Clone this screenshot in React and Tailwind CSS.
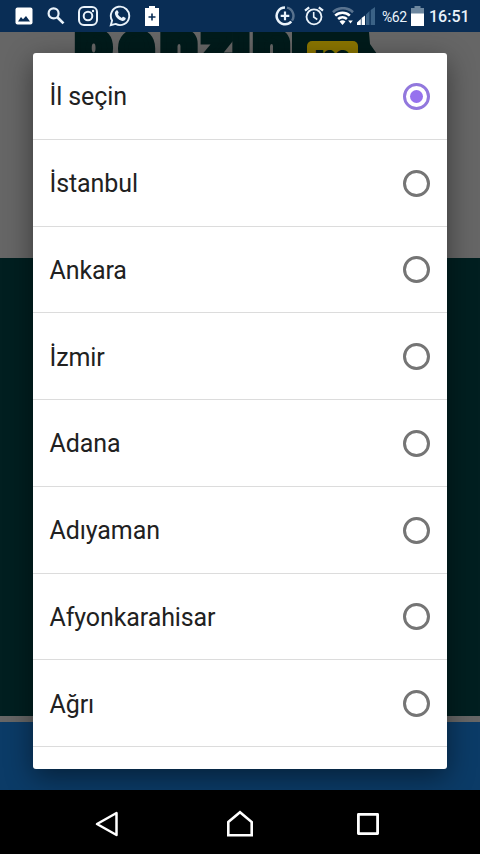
const CITIES = ['İl seçin', 'İstanbul', 'Ankara', 'İzmir', 'Adana', 'Adıyaman', 'Afyonkarahisar', 'Ağrı'];

function StatusBar() {
  return (
    <header className="relative z-10 flex h-8 shrink-0 items-center bg-[#092d55] pl-[15px] pr-[11px] text-[#eaf3fb]">
      {/* Notifications */}
      <svg className="w-[18px] h-[18px]" viewBox="0 0 18 18">
        <rect x="0.5" y="0.5" width="17" height="17" rx="2" fill="#fff" />
        <path d="M3 14.5L6 10l2 2.2L11 9l4 5.5z" fill="#092d55" />
      </svg>
      <svg className="ml-[14px] w-[18px] h-[18px]" viewBox="0 0 18 18" fill="none" stroke="currentColor" strokeWidth="2.2">
        <circle cx="6.6" cy="6.4" r="5" />
        <path d="M10.3 10.2l6.2 6.2" strokeWidth="2.7" />
      </svg>
      <svg className="ml-[13px] w-5 h-5" viewBox="0 0 20 20" fill="none" stroke="currentColor" strokeWidth="2">
        <rect x="1" y="1" width="18" height="18" rx="5" />
        <circle cx="10" cy="10" r="4.3" />
        <circle cx="15" cy="5" r="1.2" fill="currentColor" stroke="none" />
      </svg>
      <svg className="ml-[11px] w-[22px] h-[22px]" viewBox="0 0 22 22">
        <path d="M1.8 20.2l1.3-4.7a9.2 9.2 0 1 1 3.5 3.4z" fill="none" stroke="currentColor" strokeWidth="1.9" />
        <path d="M7.3 5.5c.5-.5 1.2-.5 1.5.2l.8 1.8c.2.5-.1.9-.8 1.6.9 1.7 2.1 2.9 4 3.8.8-1 1.1-1.3 1.6-1.1l1.9.9c.6.3.5 1 .1 1.8-.7 1.3-2.3 1.7-3.8 1.2-3.5-1.1-5.8-3.5-6.6-6.5-.4-1.5.3-2.8 1.3-3.7z" fill="currentColor" />
      </svg>
      <svg className="ml-[14px] w-[14px] h-[22px]" viewBox="0 0 14 22">
        <path d="M4 1h6v2h4v18H0V3h4z" fill="#fff" />
        <path d="M7 8.5v7M3.5 12h7" stroke="#092d55" strokeWidth="1.6" />
      </svg>

      {/* System icons */}
      <svg className="ml-auto w-[20px] h-5" viewBox="0 0 20 20" fill="none">
        <path d="M12 1.7a8.4 8.4 0 0 1 5 12.9" stroke="#59738f" strokeWidth="2.4" />
        <path d="M10 1.5a8.4 8.4 0 1 0 6.3 14" stroke="currentColor" strokeWidth="2.5" />
        <path d="M10 5.6v8.6M5.7 9.9h8.6" stroke="currentColor" strokeWidth="2.2" />
      </svg>
      <svg className="ml-[9px] w-5 h-5" viewBox="0 0 20 20" fill="none" stroke="currentColor">
        <circle cx="10" cy="10.8" r="7.5" strokeWidth="1.8" />
        <path d="M1 4.7l4.2-3.4M19 4.7l-4.2-3.4" strokeWidth="2.2" />
        <path d="M9.7 6v5l3.6 2.5" strokeWidth="1.6" />
      </svg>
      <svg className="ml-[8px] w-[22px] h-[18px]" viewBox="0 0 22 18" fill="none" strokeWidth="2.6">
        <path d="M1 5.2a14.5 14.5 0 0 1 20 0" stroke="#59738f" />
        <path d="M3.2 8.6a10.7 10.7 0 0 1 14.6 0" stroke="#fff" />
        <path d="M6.1 12a6.8 6.8 0 0 1 8.8 0" stroke="#fff" />
        <path d="M7.5 14.6a4.5 4.5 0 0 1 6 0l-3 3.3z" fill="#fff" />
        <path d="M18.5 16.5l2.3-3h-4.6z" fill="#fff" />
      </svg>
      <svg className="ml-[3px] w-[18px] h-[18px]" viewBox="0 0 18 18">
        <path d="M0 18v-2.6L3.8 12v6z" fill="#fff" />
        <path d="M4.6 18v-7l3.4-2.5V18z" fill="#fff" />
        <path d="M9 18V7.5L12.5 4v14zM13.7 18V3L18 0v18z" fill="#3b6286" />
      </svg>
      <span className="ml-[7px] w-[25px] whitespace-nowrap pt-px text-[14px] leading-none tracking-[-0.4px]">%62</span>
      <svg className="ml-[4px] w-[13px] h-5" viewBox="0 0 13 20">
        <path d="M3.5 0h6v2H13v7H0V2h3.5z" fill="#6d879f" />
        <path d="M0 7.5h13V20H0z" fill="#fff" />
      </svg>
      <span className="ml-[5px] w-[40px] whitespace-nowrap pt-px text-[16px] font-medium leading-none">16:51</span>
    </header>
  );
}

function Logo() {
  return (
    <div className="flex h-[226px] items-start overflow-hidden bg-[#666] pl-[72px]">
      <div className="-mt-[24px] flex text-center text-[57px] leading-[72px] font-black text-[#011b1b] font-['Inter',sans-serif] [-webkit-text-stroke:6px_#011b1b]">
        <span className="w-[43px]">b</span>
        <span className="w-[43px]">e</span>
        <span className="w-[42px]">n</span>
        <span className="w-[31px]">z</span>
        <span className="w-[20px]">i</span>
        <span className="w-[41px]">n</span>
      </div>
      <div className="h-[60px] w-[85px] bg-[#011b1b] pl-[14px] pt-[9px] [clip-path:polygon(0_0,77px_0,78px_12px,85px_22px,85px_60px,0_60px)]">
        <div className="ml-px flex h-[46px] w-[51px] justify-center rounded-[5px] bg-[#8a7500] text-[40px] leading-[34px] font-black text-[#011b1b] font-['Inter',sans-serif]">m</div>
      </div>
    </div>
  );
}

function Radio({ checked }) {
  return (
    <span className={`mt-px flex h-[27px] w-[27px] items-center justify-center rounded-full border-3 ${checked ? 'border-[#9278dd]' : 'border-[#757575]'}`}>
      {checked && <span className="h-[13px] w-[13px] rounded-full bg-[#9672ee]" />}
    </span>
  );
}

function CityDialog() {
  return (
    <div className="absolute left-[33px] top-[21px] h-[716px] w-[414px] overflow-hidden rounded-[3px] bg-white shadow-[0_8px_28px_rgba(0,0,0,0.45)]">
      {CITIES.map((city, i) => (
        <div key={city} className="flex h-[86.75px] items-center justify-between border-b border-[#dcdcdc] pl-[16.5px] pr-[17.5px]">
          <span className="pt-[3px] text-[25px] leading-8 tracking-[-0.1px] text-[#212121]">{city}</span>
          <Radio checked={i === 0} />
        </div>
      ))}
    </div>
  );
}

function NavBar() {
  return (
    <nav className="relative z-10 flex h-16 shrink-0 items-center justify-between bg-black pl-[94px] pr-[98px] pt-[4px]">
      <svg className="w-7 h-7" viewBox="0 0 28 28" fill="none" stroke="#fff" strokeWidth="2.5" strokeLinejoin="round">
        <path d="M3 14L22.5 3v22z" />
      </svg>
      <svg className="ml-[4px] w-7 h-7" viewBox="0 0 28 28" fill="none" stroke="#fff" strokeWidth="2.6">
        <path d="M2.3 12L14 2.2 25.7 12v13.3H2.3z" />
      </svg>
      <svg className="w-7 h-7" viewBox="0 0 28 28" fill="none" stroke="#fff" strokeWidth="2.8" strokeLinejoin="round">
        <rect x="4.4" y="4.4" width="19.2" height="19.2" />
      </svg>
    </nav>
  );
}

export default function App() {
  return (
    <div className="flex h-[854px] w-[480px] flex-col overflow-hidden font-['Roboto',sans-serif]">
      <StatusBar />
      <main className="relative flex-1 overflow-hidden bg-[#0b3b67]">
        <Logo />
        <div className="h-[458px] bg-[#011f20]" />
        <div className="h-[6px] bg-[#666]" />
        <CityDialog />
      </main>
      <NavBar />
    </div>
  );
}
